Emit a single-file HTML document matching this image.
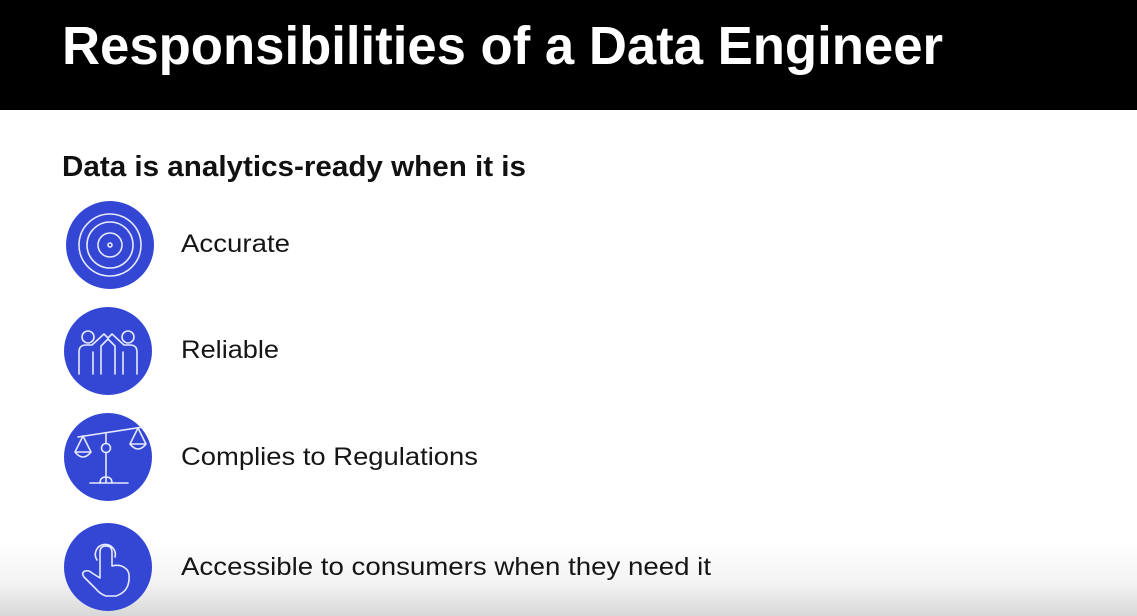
<!DOCTYPE html>
<html><head><meta charset="utf-8"><style>
html,body{margin:0;padding:0;width:1137px;height:616px;overflow:hidden;background:#fff}
svg{display:block}
</style></head><body>
<svg width="1137" height="616" viewBox="0 0 1137 616" xmlns="http://www.w3.org/2000/svg">
<defs>
<linearGradient id="g" x1="0" y1="0" x2="0" y2="1">
<stop offset="0" stop-color="#ffffff"/><stop offset="0.55" stop-color="#f4f4f4"/><stop offset="1" stop-color="#d8d8d8"/>
</linearGradient>
</defs>
<rect x="0" y="0" width="1137" height="616" fill="#fff"/>
<rect x="0" y="540" width="1137" height="76" fill="url(#g)"/>
<rect x="0" y="0" width="1137" height="110" fill="#000"/>
<g font-family="Liberation Sans, sans-serif">
<text x="62" y="64" fill="#fff" font-weight="bold" font-size="54" textLength="881" lengthAdjust="spacingAndGlyphs">Responsibilities of a Data Engineer</text>
<text x="62" y="176" fill="#111" font-weight="bold" font-size="29" textLength="464" lengthAdjust="spacingAndGlyphs">Data is analytics-ready when it is</text>
<g fill="#161616" font-size="25">
<text x="181" y="252" textLength="109" lengthAdjust="spacingAndGlyphs">Accurate</text>
<text x="181" y="358" textLength="98" lengthAdjust="spacingAndGlyphs">Reliable</text>
<text x="181" y="465" textLength="297" lengthAdjust="spacingAndGlyphs">Complies to Regulations</text>
<text x="181" y="575" textLength="530" lengthAdjust="spacingAndGlyphs">Accessible to consumers when they need it</text>
</g>
</g>
<g fill="#3447d4">
<circle cx="110" cy="245" r="44"/>
<circle cx="108" cy="351" r="44"/>
<circle cx="108" cy="457" r="44"/>
<circle cx="108" cy="567" r="44"/>
</g>
<g fill="none" stroke="#e6e9ff" stroke-width="1.6" stroke-linecap="round" stroke-linejoin="round">
<circle cx="110" cy="245" r="31"/>
<circle cx="110" cy="245" r="23"/>
<circle cx="110" cy="245" r="12"/>
<circle cx="110" cy="245" r="2"/>
<!-- reliable -->
<circle cx="88" cy="337" r="6"/>
<circle cx="128" cy="337" r="6"/>
<path d="M79 374 V352 Q79 345 86 345 H92 L104 334 L108 338 L112 334 L124 345 H130 Q137 345 137 352 V374"/>
<path d="M93 374 V352"/><path d="M123 374 V352"/>
<path d="M101 374 V346 L108 339 L115 346 V374"/>
<!-- scale -->
<path d="M78 437 L143 427"/>
<circle cx="106" cy="448" r="4.5"/>
<path d="M106 433 V443.5 M106 452.5 V482"/>
<path d="M90 483 H128"/>
<path d="M100 483 Q100 477 106 477 Q112 477 112 483"/>
<path d="M83 436 L75 452 H91 Z M75 452 Q83 462 91 452"/>
<path d="M138 428 L130 444 H146 Z M130 444 Q138 454 146 444"/>
<!-- hand -->
<path d="M97 560 A10 10 0 1 1 115 557"/>
<path d="M100 578 V552 Q100 546 106 546 Q112 546 112 552 V566 Q120 564 125 568 Q130 571 129 580 Q128 592 116 596 H106 Q100 594 96 589 L84 577 Q81 573 85 571 Q89 570 92 573 Z"/>
</g>
</svg>
</body></html>
